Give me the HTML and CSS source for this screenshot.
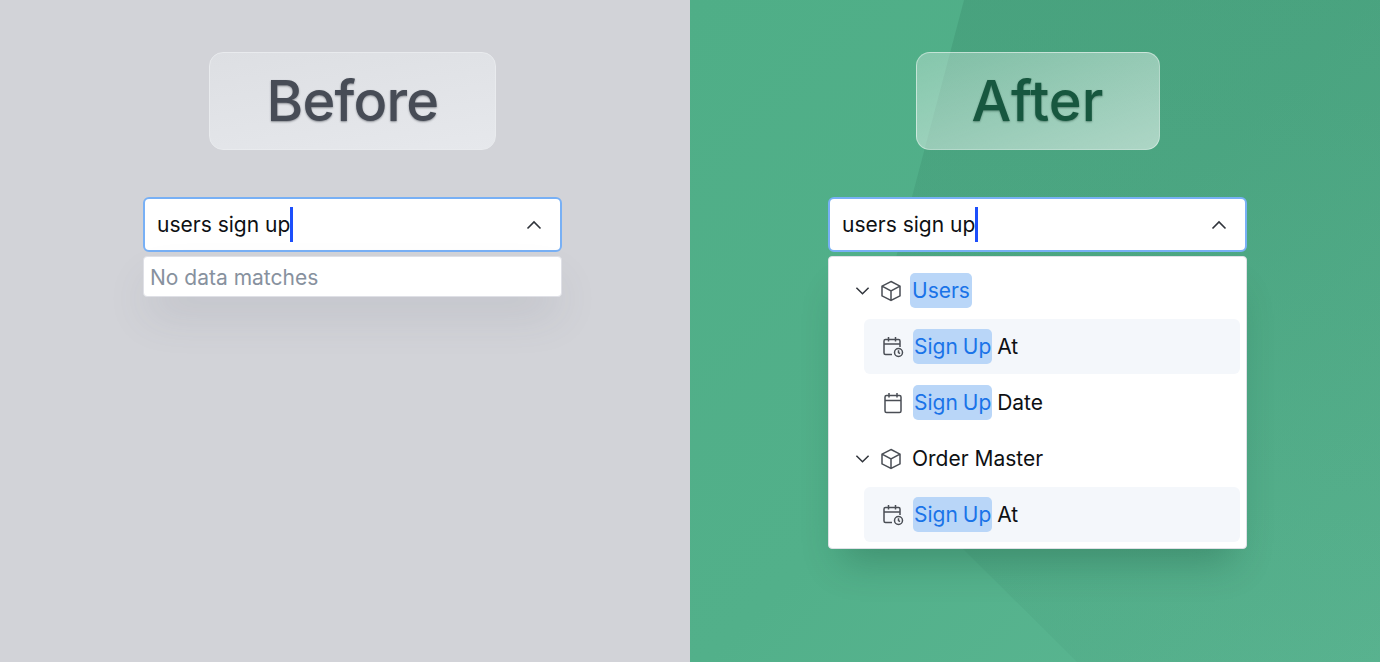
FILE: index.html
```html
<!DOCTYPE html>
<html lang="en">
<head>
    <meta charset="UTF-8">
    <title>Before / After</title>
    <link rel="stylesheet" href="styles.css">
</head>
<body>
    <div class="wrapper">
        <section class="panel panel-before">
            <div class="column">
                <h1 class="badge badge-before">Before</h1>
                <div class="select">
                    <span class="select-text">users sign up</span><span class="caret"></span>
                    <svg class="arrow" viewBox="0 0 16 10"><path d="M1.5 8.5 8 2l6.5 6.5"/></svg>
                </div>
                <div class="dropdown empty">No data matches</div>
            </div>
        </section>

        <section class="panel panel-after">
            <svg class="facets" viewBox="0 0 690 662" preserveAspectRatio="none">
                <defs>
                    <linearGradient id="facetFade" x1="0" y1="0" x2="0" y2="1">
                        <stop offset="0" stop-color="#2f7a5e" stop-opacity="0.24"/>
                        <stop offset="1" stop-color="#2f7a5e" stop-opacity="0.08"/>
                    </linearGradient>
                </defs>
                <polygon fill="url(#facetFade)" points="274,0 690,0 690,662 387,662 273,549 140,549 140,507"/>
            </svg>
            <div class="column">
                <h1 class="badge badge-after">After</h1>
                <div class="select">
                    <span class="select-text">users sign up</span><span class="caret"></span>
                    <svg class="arrow" viewBox="0 0 16 10"><path d="M1.5 8.5 8 2l6.5 6.5"/></svg>
                </div>
                <div class="dropdown tree">
                    <div class="row group">
                        <svg class="chevron" viewBox="0 0 16 10"><path d="M1.5 1.5 8 8l6.5-6.5"/></svg>
                        <svg class="icon" viewBox="0 0 22 22"><path d="M11 1.5 20 6.2v9.6l-9 4.7-9-4.7V6.2zM2 6.2l9 4.8 9-4.8M11 11v9.5"/></svg>
                        <span class="label"><mark>Users</mark></span>
                    </div>
                    <div class="row leaf active">
                        <svg class="icon" viewBox="0 0 22 22"><path d="M10 18.500H3.500A1.500 1.500 0 0 1 2 17V5a1.500 1.500 0 0 1 1.500-1.500h13A1.500 1.500 0 0 1 18 5v6M2 8h16M6.500 1v4.500M13.500 1v4.500"/><circle cx="16.500" cy="16.500" r="4"/><path d="M16.500 14.300v2.300l1.500 1"/></svg>
                        <span class="label"><mark>Sign Up</mark> At</span>
                    </div>
                    <div class="row leaf">
                        <svg class="icon" viewBox="0 0 22 22"><path d="M4.500 3.500h13A1.500 1.500 0 0 1 19 5v14a1.500 1.500 0 0 1-1.500 1.500h-13A1.500 1.500 0 0 1 3 19V5a1.500 1.500 0 0 1 1.500-1.500zM3 8.500h16M7 1v4.500M15 1v4.500"/></svg>
                        <span class="label"><mark>Sign Up</mark> Date</span>
                    </div>
                    <div class="row group">
                        <svg class="chevron" viewBox="0 0 16 10"><path d="M1.5 1.5 8 8l6.5-6.5"/></svg>
                        <svg class="icon" viewBox="0 0 22 22"><path d="M11 1.5 20 6.2v9.6l-9 4.7-9-4.7V6.2zM2 6.2l9 4.8 9-4.8M11 11v9.5"/></svg>
                        <span class="label label-plain">Order Master</span>
                    </div>
                    <div class="row leaf active">
                        <svg class="icon" viewBox="0 0 22 22"><path d="M10 18.500H3.500A1.500 1.500 0 0 1 2 17V5a1.500 1.500 0 0 1 1.500-1.500h13A1.500 1.500 0 0 1 18 5v6M2 8h16M6.500 1v4.500M13.500 1v4.500"/><circle cx="16.500" cy="16.500" r="4"/><path d="M16.500 14.300v2.300l1.500 1"/></svg>
                        <span class="label"><mark>Sign Up</mark> At</span>
                    </div>
                </div>
            </div>
        </section>
    </div>
</body>
</html>
```

FILE: styles.css
```css
:root {
    --input-border: #78b0f5;
    --highlight: #b9d6f8;
    --highlight-text: #1a73e8;
    --row-active: #f4f7fb;
}

html, body {
    margin: 0;
    height: 100%;
    overflow: hidden;
}

body {
    font-family: Inter, "Liberation Sans", sans-serif;
}

.wrapper {
    display: grid;
    grid-template-columns: 690px 690px;
    height: 662px;
}

.panel {
    position: relative;
    overflow: hidden;
    padding-top: 52px;
}

.panel-before {
    background-color: #d2d3d8;
    padding-left: 143px;
}

.panel-after {
    background: linear-gradient(135deg, #4fae87 0%, #52b08a 50%, #5cb793 100%);
    padding-left: 138px;
}

.facets {
    position: absolute;
    top: 0;
    left: 0;
    width: 690px;
    height: 662px;
}

.column {
    position: relative;
    width: 419px;
    display: flex;
    flex-direction: column;
    align-items: center;
}

.badge {
    box-sizing: border-box;
    height: 98px;
    margin: 0 0 47px 0;
    display: flex;
    align-items: center;
    justify-content: center;
    border-radius: 14px;
    font-size: 56px;
    font-weight: 500;
    line-height: 1;
}

.badge-before {
    width: 287px;
    letter-spacing: -0.8px;
    color: #474c56;
    background: linear-gradient(170deg, #dddfe3, #e6e8ec);
    border: 1.5px solid #e9ebee;
    text-shadow: 0 1px 2px rgba(30, 35, 45, 0.45);
}

.badge-after {
    width: 244px;
    color: #17573f;
    background: linear-gradient(160deg, rgba(255, 255, 255, 0.3), rgba(255, 255, 255, 0.55));
    border: 1.5px solid rgba(255, 255, 255, 0.4);
    text-shadow: 0 1px 2px rgba(10, 50, 35, 0.45);
}

.select {
    box-sizing: border-box;
    width: 100%;
    height: 55px;
    display: flex;
    align-items: center;
    padding-left: 12px;
    background-color: #fff;
    border: 2px solid var(--input-border);
    border-radius: 6px;
    font-size: 21px;
    color: #0e1013;
}

.select-text {
    padding-bottom: 1px;
}

.caret {
    width: 3px;
    height: 35px;
    background-color: #1d4ffb;
}

.arrow {
    width: 16px;
    height: 10px;
    margin-left: auto;
    margin-right: 18px;
    fill: none;
    stroke: #30343b;
    stroke-width: 1.6;
}

.dropdown {
    box-sizing: border-box;
    width: 100%;
    margin-top: 4px;
    background-color: #fff;
    border-radius: 4px;
    border: 1px solid #dfe0e6;
}

.empty {
    height: 41px;
    padding-left: 6px;
    font-size: 21px;
    line-height: 42px;
    color: #87919e;
    box-shadow: 0 22px 44px -6px rgba(90, 95, 110, 0.16);
}

.tree {
    height: 293px;
    padding-top: 5px;
    box-shadow: 0 26px 36px -14px rgba(20, 70, 50, 0.3);
}

.row {
    height: 55px;
    margin-top: 1px;
    display: flex;
    align-items: center;
    font-size: 21px;
    color: #0e1013;
}

.group {
    padding-left: 26px;
}

.leaf {
    margin-left: 35px;
    margin-right: 6px;
    padding-left: 18px;
    border-radius: 6px;
    word-spacing: -1px;
}

.active {
    background-color: var(--row-active);
}

.chevron {
    width: 15px;
    height: 10px;
    margin-right: 10px;
    fill: none;
    stroke: #30343b;
    stroke-width: 1.6;
}

.icon {
    width: 22px;
    height: 22px;
    flex: none;
    fill: none;
    stroke: #4a4e55;
    stroke-width: 1.5;
}

.group .icon {
    margin-right: 8px;
}

.leaf .icon {
    margin-right: 9px;
}

.label-plain {
    padding-left: 2px;
}

mark {
    display: inline-block;
    height: 35px;
    line-height: 35px;
    padding: 0 2px;
    border-radius: 5px;
    background-color: var(--highlight);
    color: var(--highlight-text);
}

.leaf mark {
    padding: 0 1px;
}
```
